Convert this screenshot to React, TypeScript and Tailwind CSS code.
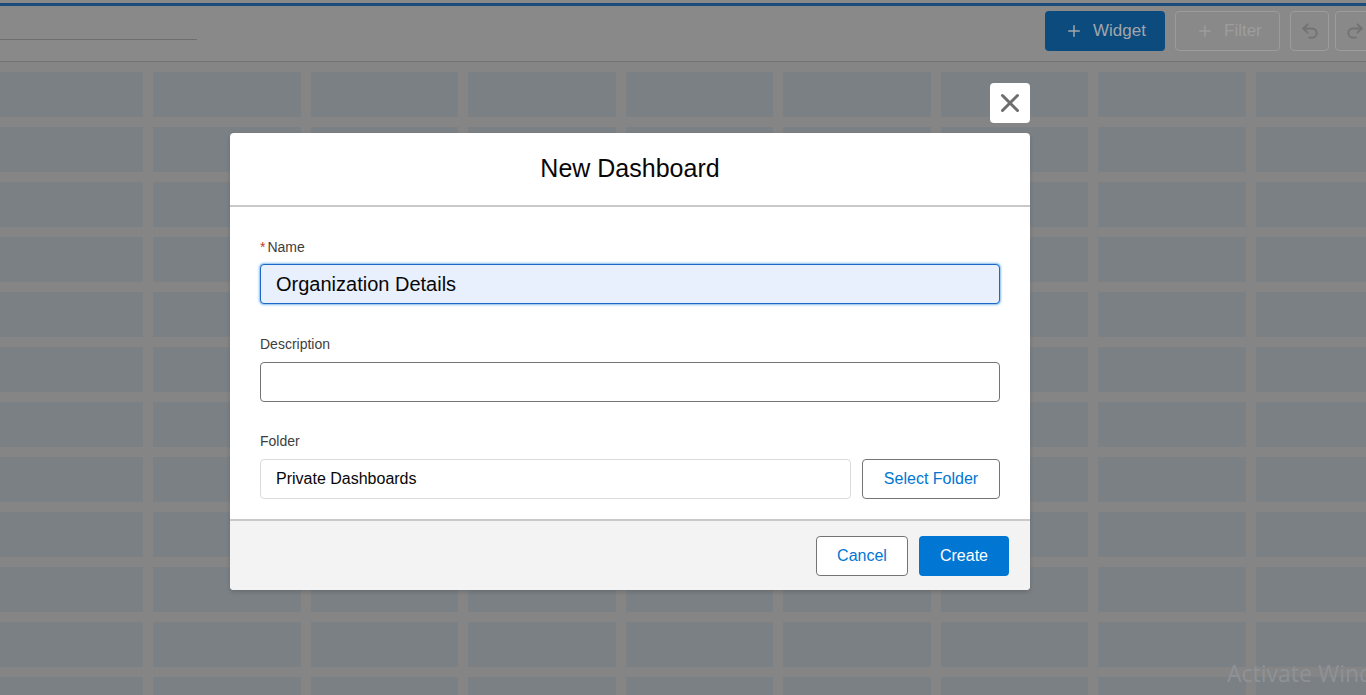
import { Plus, Undo2, Redo2, X } from "lucide-react";

const font = { fontFamily: '"Liberation Sans", Arial, sans-serif' };

const App = () => {
  const cells = Array.from({ length: 9 * 12 });

  return (
    <div className="relative w-[1366px] h-[695px] overflow-hidden bg-[#858585]" style={font}>
      {/* Header (dimmed by modal backdrop) */}
      <div className="h-[62px] bg-[#898989] border-b border-[#737373] pt-[3px]">
        <div className="h-[3px] bg-[#1a4d7c]" />
        <div className="relative flex items-start h-[55px]">
          <div className="mt-[33px] w-[197px] border-b border-[#6f6f6f]" />
          <div className="ml-auto flex items-center gap-[10px] mt-[5px] -mr-[8px]">
            <div className="flex items-center gap-[10px] h-[40px] w-[120px] pl-[20px] rounded-[4px] bg-[#0c4b7e] text-[#a2a6ab] text-[17px]">
              <Plus className="w-[18px] h-[18px]" strokeWidth={2} />
              Widget
            </div>
            <div className="flex items-center gap-[10px] h-[40px] w-[105px] pl-[20px] rounded-[4px] border border-[#9c9c9c] text-[#9d9d9d] text-[17px]">
              <Plus className="w-[18px] h-[18px]" strokeWidth={2} />
              Filter
            </div>
            <div className="flex items-center gap-[6px]">
              <div className="flex items-center justify-center h-[40px] w-[39px] rounded-[4px] border border-[#9c9c9c] text-[#727272]">
                <Undo2 className="w-[20px] h-[20px]" strokeWidth={2.2} />
              </div>
              <div className="flex items-center justify-center h-[40px] w-[39px] rounded-[4px] border border-[#9c9c9c] text-[#727272]">
                <Redo2 className="w-[20px] h-[20px]" strokeWidth={2.2} />
              </div>
            </div>
          </div>
        </div>
      </div>

      {/* Dashboard grid */}
      <div className="pt-[10px] -ml-[4.5px] grid grid-cols-[repeat(9,147.5px)] auto-rows-[45px] gap-[10px]">
        {cells.map((_, i) => (
          <div key={i} className="bg-[#7b8085]" />
        ))}
      </div>

      {/* Windows watermark */}
      <div
        className="absolute left-[1227px] top-[656px] text-[23px] text-[#8e9297] whitespace-nowrap"
        style={{ fontFamily: '"Open Sans", "Noto Sans", sans-serif' }}
      >
        Activate Windows
      </div>

      {/* Close button */}
      <button className="absolute left-[990px] top-[83px] w-[40px] h-[40px] flex items-center justify-center bg-white rounded-[4px] text-[#6e6e6e]">
        <X className="w-[30px] h-[30px]" strokeWidth={2.4} />
      </button>

      {/* Modal */}
      <div className="absolute left-[230px] top-[133px] w-[800px] bg-white rounded-[4px] shadow-[0_2px_4px_rgba(0,0,0,0.16)] overflow-hidden">
        <div className="h-[74px] flex items-center justify-center border-b-2 border-[#c9c9c9]">
          <h2 className="text-[25px] text-[#080707]">New Dashboard</h2>
        </div>

        <div className="px-[30px] pt-[30px] pb-[20px]">
          <label className="flex items-center text-[14px] leading-[20px] text-[#3e3e3c] mb-[7px]">
            <span className="text-[#c23934] mr-[2px]">*</span>
            Name
          </label>
          <div className="h-[40px] flex items-center pl-[15px] rounded-[4px] border border-[#1b6ac9] bg-[#e8f0fe] shadow-[0_0_3px_#0176d3] text-[20px] text-[#080707]">
            Organization Details
          </div>

          <label className="block text-[14px] leading-[20px] text-[#3e3e3c] mt-[30px] mb-[8px]">Description</label>
          <div className="h-[40px] rounded-[4px] border border-[#747474]" />

          <label className="block text-[14px] leading-[20px] text-[#3e3e3c] mt-[29px] mb-[8px]">Folder</label>
          <div className="flex gap-[11px]">
            <div className="flex-1 h-[40px] flex items-center pl-[15px] rounded-[4px] border border-[#dddbda] text-[16px] text-[#080707]">
              Private Dashboards
            </div>
            <button className="w-[138px] h-[40px] rounded-[4px] border border-[#747474] text-[16px] text-[#0176d3]">
              Select Folder
            </button>
          </div>
        </div>

        <div className="h-[71px] bg-[#f3f3f3] border-t-2 border-[#c9c9c9] flex items-center justify-end gap-[11px] pr-[21px]">
          <button className="w-[92px] h-[40px] rounded-[4px] border border-[#747474] bg-white text-[16px] text-[#0176d3]">
            Cancel
          </button>
          <button className="w-[90px] h-[40px] rounded-[4px] bg-[#0176d3] text-[16px] text-white">
            Create
          </button>
        </div>
      </div>
    </div>
  );
};

export default App;
